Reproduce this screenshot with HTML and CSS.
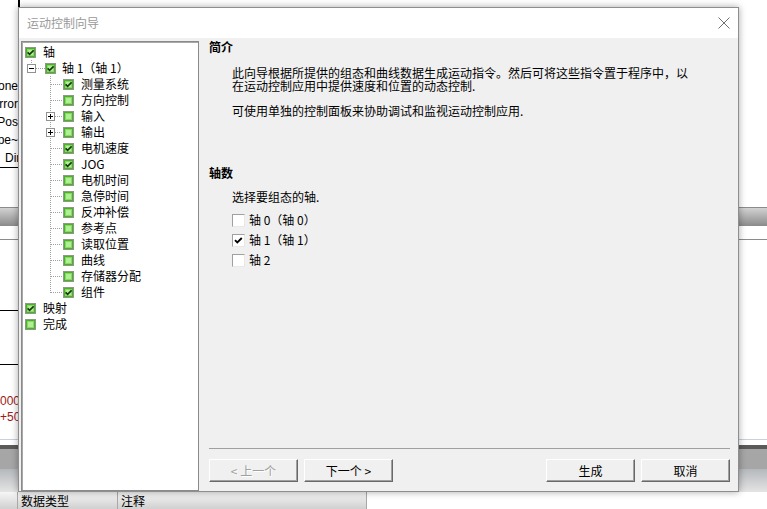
FILE: index.html
```html
<!DOCTYPE html>
<html lang="zh-CN">
<head>
<meta charset="utf-8">
<title>运动控制向导</title>
<link rel="stylesheet" href="styles.css">
</head>
<body>
<svg class="defs" width="0" height="0" aria-hidden="true">
  <symbol id="off" viewBox="0 0 11 11">
    <rect x="0.5" y="0.5" width="10" height="10" fill="#4fae2e" stroke="#8c9a88"/>
    <rect x="2" y="2" width="7" height="7" fill="#86da62"/>
    <rect x="3" y="3" width="5" height="5" fill="#b2ee98"/>
  </symbol>
  <symbol id="on" viewBox="0 0 11 11">
    <rect x="0.5" y="0.5" width="10" height="10" fill="#4fae2e" stroke="#8c9a88"/>
    <rect x="2" y="2" width="7" height="7" fill="#86da62"/>
    <rect x="3" y="3" width="5" height="5" fill="#b2ee98"/>
    <path d="M2.6 5.3 4.6 7.3 8.6 3.3" fill="none" stroke="#17380c" stroke-width="1.7"/>
  </symbol>
</svg>

<div class="app">
  <div class="bg-top"><div class="bg-top-edge"></div></div>
  <div class="bg-list">
    <div class="bg-item"><span>Done</span></div>
    <div class="bg-item"><span>Error</span></div>
    <div class="bg-item"><span>Pos</span></div>
    <div class="bg-item"><span>Type~</span></div>
    <div class="bg-item start"><span>Dir</span></div>
  </div>
  <div class="bg-band"></div>
  <div class="bg-rule"></div>
  <div class="bg-box a"></div>
  <div class="bg-box b"></div>
  <div class="bg-values">
    <div class="bg-val">0000</div>
    <div class="bg-val">+500</div>
  </div>
  <div class="bg-bottom">
    <div class="bb1"></div>
    <div class="bb2"></div>
    <div class="bb3"></div>
    <div class="bb4"></div>
    <div class="bb5"></div>
  </div>
  <div class="bg-header">
    <div class="hcell hc0"></div>
    <div class="hcell hc1">数据类型</div>
    <div class="hcell hc2">注释</div>
  </div>
</div>

<div class="dialog">
  <div class="titlebar">
    <span class="title">运动控制向导</span>
    <svg class="close" width="12" height="12" viewBox="0 0 12 12"><path d="M0.5 0.5 11.5 11.5M11.5 0.5 0.5 11.5" stroke="#707070" stroke-width="1" fill="none"/></svg>
  </div>
  <div class="body">
    <div class="tree">
      <div class="node l0"><svg class="ck" width="11" height="11"><use href="#on"/></svg><span class="lbl">轴</span></div>
      <div class="node l1"><svg class="conn" width="23" height="16"><path class="dot" d="M9.5 0V4"/><rect class="exp" x="5.5" y="4.5" width="8" height="8"/><path class="sign" d="M7 8.5H12"/><path class="dot" d="M14 8.5H23"/></svg><svg class="ck" width="11" height="11"><use href="#on"/></svg><span class="lbl">轴 1（轴 1）</span></div>
      <div class="node l2"><svg class="conn" width="41" height="16"><path class="dot" d="M28.5 0V16M29 8.5H41"/></svg><svg class="ck" width="11" height="11"><use href="#on"/></svg><span class="lbl">测量系统</span></div>
      <div class="node l2"><svg class="conn" width="41" height="16"><path class="dot" d="M28.5 0V16M29 8.5H41"/></svg><svg class="ck" width="11" height="11"><use href="#off"/></svg><span class="lbl">方向控制</span></div>
      <div class="node l2"><svg class="conn" width="41" height="16"><path class="dot" d="M28.5 0V16M33 8.5H41"/><rect class="exp" x="24.5" y="4.5" width="8" height="8"/><path class="sign" d="M26 8.5H31M28.5 6V11"/></svg><svg class="ck" width="11" height="11"><use href="#off"/></svg><span class="lbl">输入</span></div>
      <div class="node l2"><svg class="conn" width="41" height="16"><path class="dot" d="M28.5 0V16M33 8.5H41"/><rect class="exp" x="24.5" y="4.5" width="8" height="8"/><path class="sign" d="M26 8.5H31M28.5 6V11"/></svg><svg class="ck" width="11" height="11"><use href="#off"/></svg><span class="lbl">输出</span></div>
      <div class="node l2"><svg class="conn" width="41" height="16"><path class="dot" d="M28.5 0V16M29 8.5H41"/></svg><svg class="ck" width="11" height="11"><use href="#on"/></svg><span class="lbl">电机速度</span></div>
      <div class="node l2"><svg class="conn" width="41" height="16"><path class="dot" d="M28.5 0V16M29 8.5H41"/></svg><svg class="ck" width="11" height="11"><use href="#on"/></svg><span class="lbl">JOG</span></div>
      <div class="node l2"><svg class="conn" width="41" height="16"><path class="dot" d="M28.5 0V16M29 8.5H41"/></svg><svg class="ck" width="11" height="11"><use href="#off"/></svg><span class="lbl">电机时间</span></div>
      <div class="node l2"><svg class="conn" width="41" height="16"><path class="dot" d="M28.5 0V16M29 8.5H41"/></svg><svg class="ck" width="11" height="11"><use href="#off"/></svg><span class="lbl">急停时间</span></div>
      <div class="node l2"><svg class="conn" width="41" height="16"><path class="dot" d="M28.5 0V16M29 8.5H41"/></svg><svg class="ck" width="11" height="11"><use href="#off"/></svg><span class="lbl">反冲补偿</span></div>
      <div class="node l2"><svg class="conn" width="41" height="16"><path class="dot" d="M28.5 0V16M29 8.5H41"/></svg><svg class="ck" width="11" height="11"><use href="#off"/></svg><span class="lbl">参考点</span></div>
      <div class="node l2"><svg class="conn" width="41" height="16"><path class="dot" d="M28.5 0V16M29 8.5H41"/></svg><svg class="ck" width="11" height="11"><use href="#off"/></svg><span class="lbl">读取位置</span></div>
      <div class="node l2"><svg class="conn" width="41" height="16"><path class="dot" d="M28.5 0V16M29 8.5H41"/></svg><svg class="ck" width="11" height="11"><use href="#off"/></svg><span class="lbl">曲线</span></div>
      <div class="node l2"><svg class="conn" width="41" height="16"><path class="dot" d="M28.5 0V16M29 8.5H41"/></svg><svg class="ck" width="11" height="11"><use href="#off"/></svg><span class="lbl">存储器分配</span></div>
      <div class="node l2"><svg class="conn" width="41" height="16"><path class="dot" d="M28.5 0V9M29 8.5H41"/></svg><svg class="ck" width="11" height="11"><use href="#on"/></svg><span class="lbl">组件</span></div>
      <div class="node l0"><svg class="ck" width="11" height="11"><use href="#on"/></svg><span class="lbl">映射</span></div>
      <div class="node l0"><svg class="ck" width="11" height="11"><use href="#off"/></svg><span class="lbl">完成</span></div>
    </div>

    <div class="pane">
      <div class="heading">简介</div>
      <div class="para">
        <div class="pline">此向导根据所提供的组态和曲线数据生成运动指令。然后可将这些指令置于程序中，以</div>
        <div class="pline">在运动控制应用中提供速度和位置的动态控制.</div>
      </div>
      <div class="para p2">可使用单独的控制面板来协助调试和监视运动控制应用.</div>
      <div class="heading second">轴数</div>
      <div class="prompt">选择要组态的轴.</div>
      <div class="axes">
        <div class="axis"><span class="cb"></span><span class="axis-lbl">轴 0（轴 0）</span></div>
        <div class="axis"><span class="cb"><svg width="11" height="11" viewBox="0 0 11 11"><path d="M2 5.2 4.3 7.5 8.8 3" fill="none" stroke="#000" stroke-width="1.8"/></svg></span><span class="axis-lbl">轴 1（轴 1）</span></div>
        <div class="axis"><span class="cb"></span><span class="axis-lbl">轴 2</span></div>
      </div>
      <div class="footer">
        <button class="btn" disabled>&lt; 上一个</button>
        <button class="btn">下一个 &gt;</button>
        <span class="spacer"></span>
        <button class="btn">生成</button>
        <button class="btn">取消</button>
      </div>
    </div>
  </div>
</div>
</body>
</html>
```
FILE: styles.css
```css
* { box-sizing: border-box; }
html, body { margin: 0; padding: 0; }
body {
  width: 767px;
  height: 509px;
  overflow: hidden;
  position: relative;
  background: #fff;
  font: 12px/1.2 "Noto Sans CJK SC", "Liberation Sans", sans-serif;
  color: #000;
}
.defs { display: block; width: 0; height: 0; overflow: hidden; }

/* background application */
.app { width: 767px; height: 509px; display: flex; flex-direction: column; }
.app > * { flex: none; }
.bg-top { height: 77px; }
.bg-top-edge { width: 20px; height: 7px; border-right: 2px solid #000; }
.bg-list { width: 19px; overflow: hidden; border-bottom: 1px solid #000; }
.bg-item {
  height: 18px;
  display: flex;
  justify-content: flex-end;
  align-items: center;
  white-space: nowrap;
  font-family: "Liberation Sans", sans-serif;
  padding-right: 1px;
}
.bg-item.start { justify-content: flex-start; padding-left: 5px; }
.bg-band {
  margin-top: 39px;
  height: 19px;
  border-top: 1px solid #8c8c8c;
  background: linear-gradient(#d2d2d2, #8a8a8a);
}
.bg-rule { height: 14px; border-bottom: 1px solid #8c8c8c; }
.bg-box { width: 19px; border-bottom: 1px solid #000; }
.bg-box.a { height: 71px; }
.bg-box.b { height: 54px; }
.bg-values { margin-top: 28px; }
.bg-val {
  height: 16px;
  line-height: 16px;
  color: #a01818;
  font-family: "Liberation Sans", sans-serif;
}
.bg-bottom { margin-top: 14px; }
.bb1 { height: 1px; background: #c6d0e0; }
.bb2 { height: 5px; background: #fff; }
.bb3 { height: 4px; background: #5a5a5a; }
.bb4 { height: 20px; background: #a6a6a6; }
.bb5 { height: 23px; background: linear-gradient(#b4b8bc, #e4e4e4); }
.bg-header {
  width: 367px;
  height: 17px;
  display: flex;
  background: linear-gradient(#f6f6f6, #d0d0d0);
  line-height: 17px;
}
.hcell { border-right: 1px solid #a8a8a8; padding-left: 3px; white-space: nowrap; }
.hc0 { width: 18px; }
.hc1 { width: 100px; }
.hc2 { flex: 1; }

/* dialog window */
.dialog {
  position: absolute;
  left: 18px;
  top: 7px;
  width: 721px;
  height: 485px;
  border: 1px solid #8e8e8e;
  box-shadow: 0 0 7px rgba(0, 0, 0, 0.35);
  background: #f0f0f0;
  display: flex;
  flex-direction: column;
}
.titlebar {
  height: 30px;
  flex: none;
  background: #fff;
  display: flex;
  align-items: center;
  justify-content: space-between;
  padding: 0 8px 0 8px;
}
.title { color: #9a9a9a; }
.close { display: block; }

.body { flex: 1; display: flex; min-height: 0; }

.tree {
  width: 178px;
  flex: none;
  margin: 3px 0 0 2px;
  background: #fff;
  border: 1px solid #8a8a8a;
  box-shadow: inset 1px 1px 0 #a8a8a8;
  padding-top: 2px;
}
.node { height: 16px; display: flex; align-items: center; white-space: nowrap; }
.node.l0 { padding-left: 3px; }
.conn { display: block; flex: none; }
.conn .dot { stroke: #a0a0a0; stroke-dasharray: 1 1; fill: none; shape-rendering: crispEdges; }
.conn .exp { fill: #fff; stroke: #919191; shape-rendering: crispEdges; }
.conn .sign { stroke: #000; fill: none; shape-rendering: crispEdges; }
.ck { display: block; flex: none; }
.lbl { margin-left: 7px; line-height: 16px; }
.l1 .lbl { margin-left: 6px; }

.pane {
  flex: 1;
  display: flex;
  flex-direction: column;
  padding: 2px 8px 9px 10px;
}
.heading { font-weight: bold; line-height: 14px; }
.heading.second { margin-top: 49px; }
.para { margin: 12px 0 0 23px; line-height: 13px; }
.pline { height: 13px; white-space: nowrap; }
.para.p2 { margin-top: 13px; line-height: 12px; }
.prompt { margin: 11px 0 0 23px; line-height: 12px; }
.axes { margin: 7px 0 0 23px; }
.axis { height: 20px; display: flex; align-items: center; }
.cb {
  width: 13px;
  height: 13px;
  flex: none;
  background: #fff;
  border: 1px solid;
  border-color: #a0a0a0 #e8e8e8 #e8e8e8 #a0a0a0;
  display: flex;
  align-items: center;
  justify-content: center;
}
.cb svg { display: block; }
.axis-lbl { margin-left: 4px; line-height: 12px; }

.footer {
  margin-top: auto;
  border-top: 1px solid #a0a0a0;
  padding-top: 10px;
  display: flex;
  gap: 6px;
}
.spacer { flex: 1; }
.btn {
  width: 89px;
  height: 23px;
  font: inherit;
  line-height: 12px;
  color: #000;
  background: #f0f0f0;
  border: 1px solid;
  border-color: #fff #696969 #696969 #fff;
  box-shadow: inset -1px -1px 0 #a0a0a0;
  padding: 0;
  margin: 0;
}
.btn:disabled { color: #a0a0a0; text-shadow: 1px 1px 0 #fff; }
```
